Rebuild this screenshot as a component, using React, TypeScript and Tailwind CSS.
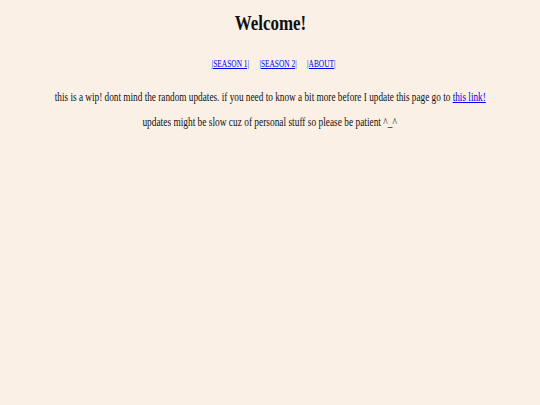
export default function App() {
  return (
    <div className="min-h-[405px] bg-[#faf0e6] text-[#111] font-['Liberation_Serif',serif] flex flex-col items-center pt-[10px] whitespace-nowrap">
      <h1 className="text-[22px] font-bold leading-[26px] scale-x-[0.77]">Welcome!</h1>
      <nav className="mt-[22px] ml-[8px] flex justify-center gap-[14px] text-[10px] leading-[12px] scale-x-[0.74]">
        <a href="#" className="text-[#0000ee] underline">|SEASON 1|</a>
        <a href="#" className="text-[#0000ee] underline">|SEASON 2|</a>
        <a href="#" className="text-[#0000ee] underline">|ABOUT|</a>
      </nav>
      <p className="mt-[20px] text-[12.5px] leading-[15px] scale-x-[0.74]">
        this is a wip! dont mind the random updates. if you need to know a bit more before I update this page go to{' '}
        <a href="#" className="text-[#0000ee] underline">this link!</a>
      </p>
      <p className="mt-[10px] text-[12.5px] leading-[15px] scale-x-[0.75]">
        updates might be slow cuz of personal stuff so please be patient ^_^
      </p>
    </div>
  )
}
